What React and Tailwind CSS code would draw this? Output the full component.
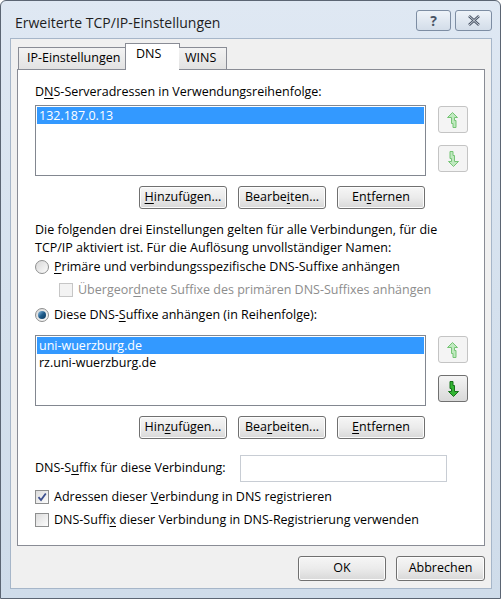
import React from "react";

const font = { fontFamily: '"Open Sans", "Noto Sans", sans-serif' };

function U({ children }) {
  return <span className="underline underline-offset-2 decoration-1">{children}</span>;
}

function Btn({ children, w = "w-[88px]", h = "h-[23px]" }) {
  return (
    <div
      className={`${w} ${h} flex items-center justify-center whitespace-nowrap rounded-[3px] border border-[#707070] bg-gradient-to-b from-[#f6f6f6] via-[#ebebeb] to-[#d8d8d8] text-[12.5px] text-black shadow-[inset_0_0_0_1px_#fcfcfc]`}
    >
      {children}
    </div>
  );
}

function Arrow({ dir, enabled }) {
  const fill = enabled ? "#33b533" : "#bfe9bf";
  const stroke = enabled ? "#17701a" : "#75c475";
  return (
    <div
      className={`w-[30px] h-[27px] flex items-center justify-center rounded-[3px] border ${
        enabled ? "border-[#707070] bg-gradient-to-b from-[#f4f4f4] to-[#d9d9d9]" : "border-[#c4c4c4] bg-[#f4f4f4]"
      }`}
    >
      <svg width="12" height="16" viewBox="0 0 12 16" style={{ transform: dir === "down" ? "rotate(180deg)" : undefined }}>
        <polygon
          points="5.5,0.5 10.5,5.5 7.5,5.5 7.5,8.5 9,8.5 9,15.5 6,15.5 6,11.5 4.5,11.5 4.5,5.5 0.5,5.5"
          fill={fill}
          stroke={stroke}
          strokeWidth="1"
          strokeLinejoin="miter"
        />
      </svg>
    </div>
  );
}

function Radio({ checked }) {
  return (
    <div className="w-[14px] h-[14px] shrink-0 rounded-full border border-[#8e8f8f] bg-gradient-to-br from-[#d8d8d8] to-[#fbfbfb] flex items-center justify-center">
      {checked && (
        <div className="w-[8px] h-[8px] rounded-full bg-gradient-to-br from-[#8fc4e8] via-[#1e5b8a] to-[#0f3a5e]" />
      )}
    </div>
  );
}

function Check({ checked, disabled }) {
  return (
    <div
      className={`w-[14px] h-[14px] shrink-0 border ${
        disabled ? "border-[#c6c6c6] bg-[#f3f3f3]" : "border-[#8e8f8f] bg-gradient-to-br from-[#dcdcdc] to-[#fdfdfd]"
      } flex items-center justify-center`}
    >
      {checked && (
        <svg width="10" height="10" viewBox="0 0 10 10">
          <path d="M1.5 5.2 L4 8 L8.8 1.5" fill="none" stroke="#3c4f8f" strokeWidth="1.8" />
        </svg>
      )}
    </div>
  );
}

function ListBox({ items }) {
  return (
    <div className="w-[391px] h-[71px] border border-[#828790] bg-white p-[1px]">
      {items.map((it, i) => (
        <div
          key={i}
          className={`h-[17px] leading-[17px] pl-[2px] text-[12.5px] ${i === 0 ? "bg-[#3399ff] text-white" : "text-black"}`}
        >
          {it}
        </div>
      ))}
    </div>
  );
}

export default function App() {
  return (
    <div style={font} className="w-[503px] h-[600px] bg-white">
      <div className="w-[501px] h-[599px] rounded-t-[6px] border border-[#5b6573] bg-gradient-to-b from-[#dfe8f3] via-[#d5e1ee] to-[#cfdcea] flex flex-col">
        {/* title bar */}
        <div className="h-[37px] flex items-start">
          <div className="pl-[14px] pt-[12px] text-[14px] leading-[20px] text-[#1e1e1e] whitespace-nowrap">Erweiterte TCP/IP-Einstellungen</div>
          <div className="ml-auto mr-[8px] mt-[9px] flex gap-[4px]">
            <div className="w-[35px] h-[21px] rounded-[3px] border border-[#7d8da3] bg-gradient-to-b from-[#eef3f9] to-[#d3dde9] flex items-center justify-center text-[14px] font-bold text-[#4a5566]">?</div>
            <div className="w-[37px] h-[21px] rounded-[3px] border border-[#7d8da3] bg-gradient-to-b from-[#eef3f9] to-[#d3dde9] flex items-center justify-center">
              <svg width="14" height="11" viewBox="0 0 14 11">
                <path d="M2 1 L12 10 M12 1 L2 10" stroke="#4a5566" strokeWidth="2.6" />
                <path d="M2 1 L12 10 M12 1 L2 10" stroke="#e9eef5" strokeWidth="0.8" />
              </svg>
            </div>
          </div>
        </div>
        {/* client */}
        <div className="ml-[9px] mr-[8px] mb-[9px] flex-1 bg-[#f0f0f0] border border-[#a6b6c9] flex flex-col">
          {/* tabs */}
          <div className="ml-[7px] mt-[4px] h-[27px] flex items-end relative z-10 text-[12.5px] whitespace-nowrap">
            <div className="h-[22px] w-[108px] border border-[#898c95] border-b-0 bg-gradient-to-b from-[#f3f3f3] to-[#e2e2e2] leading-[20px] pl-[8px] mb-[1px]">
              IP-Einstellungen
            </div>
            <div className="h-[27px] w-[55px] -ml-[1px] border border-[#898c95] border-b-0 bg-white leading-[18px] pl-[10px] pt-[1px]">
              DNS
            </div>
            <div className="h-[22px] w-[48px] -ml-[1px] border border-[#898c95] border-b-0 border-l-0 bg-gradient-to-b from-[#f3f3f3] to-[#e2e2e2] leading-[20px] pl-[6px] mb-[1px]">
              WINS
            </div>
          </div>
          {/* panel */}
          <div className="ml-[6px] -mt-[1px] w-[468px] h-[477px] border border-[#898c95] bg-white pl-[17px] text-[12.5px] text-black flex flex-col whitespace-nowrap">
            <div className="mt-[13px] h-[18px] leading-[18px]">
              D<U>N</U>S-Serveradressen in Verwendungsreihenfolge:
            </div>
            <div className="mt-[4px] flex gap-[12px]">
              <ListBox items={["132.187.0.13"]} />
              <div className="flex flex-col gap-[12px] pt-[1px]">
                <Arrow dir="up" />
                <Arrow dir="down" />
              </div>
            </div>
            <div className="mt-[10px] ml-[104px] flex gap-[11px]">
              <Btn><span><U>H</U>inzufügen...</span></Btn>
              <Btn><span>Bearbe<U>i</U>ten...</span></Btn>
              <Btn><span>En<U>t</U>fernen</span></Btn>
            </div>
            <div className="mt-[12px] leading-[18px]">
              Die folgenden drei Einstellungen gelten für alle Verbindungen, für die
              <br />
              TCP/IP aktiviert ist. Für die Auflösung unvollständiger Namen:
            </div>
            <div className="mt-[1px] h-[18px] flex items-center gap-[5px]">
              <Radio />
              <span><U>P</U>rimäre und verbindungsspezifische DNS-Suffixe anhängen</span>
            </div>
            <div className="mt-[5px] ml-[24px] h-[18px] flex items-center gap-[5px] text-[#8d8d8d]">
              <Check disabled />
              <span>Übergeor<U>d</U>nete Suffixe des primären DNS-Suffixes anhängen</span>
            </div>
            <div className="mt-[7px] h-[18px] flex items-center gap-[5px]">
              <Radio checked />
              <span>Diese DNS-<U>S</U>uffixe anhängen (in Reihenfolge):</span>
            </div>
            <div className="mt-[11px] flex gap-[12px]">
              <ListBox items={["uni-wuerzburg.de", "rz.uni-wuerzburg.de"]} />
              <div className="flex flex-col gap-[12px] pt-[1px]">
                <Arrow dir="up" />
                <Arrow dir="down" enabled />
              </div>
            </div>
            <div className="mt-[10px] ml-[104px] flex gap-[11px]">
              <Btn><span>Hin<U>z</U>ufügen...</span></Btn>
              <Btn><span>Bea<U>r</U>beiten...</span></Btn>
              <Btn><span><U>E</U>ntfernen</span></Btn>
            </div>
            <div className="mt-[16px] flex items-center">
              <span className="w-[205px]">DNS-S<U>u</U>ffix für diese Verbindung:</span>
              <div className="w-[207px] h-[27px] border border-[#c8cdd4] bg-white" />
            </div>
            <div className="mt-[6px] h-[18px] flex items-center gap-[5px]">
              <Check checked />
              <span>Adressen dieser <U>V</U>erbindung in DNS registrieren</span>
            </div>
            <div className="mt-[5px] h-[18px] flex items-center gap-[5px]">
              <Check />
              <span>DNS-Suffi<U>x</U> dieser Verbindung in DNS-Registrierung verwenden</span>
            </div>
          </div>
          <div className="mt-[10px] mr-[6px] flex justify-end gap-[10px]">
            <Btn w="w-[88px]" h="h-[25px]">OK</Btn>
            <Btn w="w-[89px]" h="h-[25px]">Abbrechen</Btn>
          </div>
        </div>
      </div>
    </div>
  );
}
